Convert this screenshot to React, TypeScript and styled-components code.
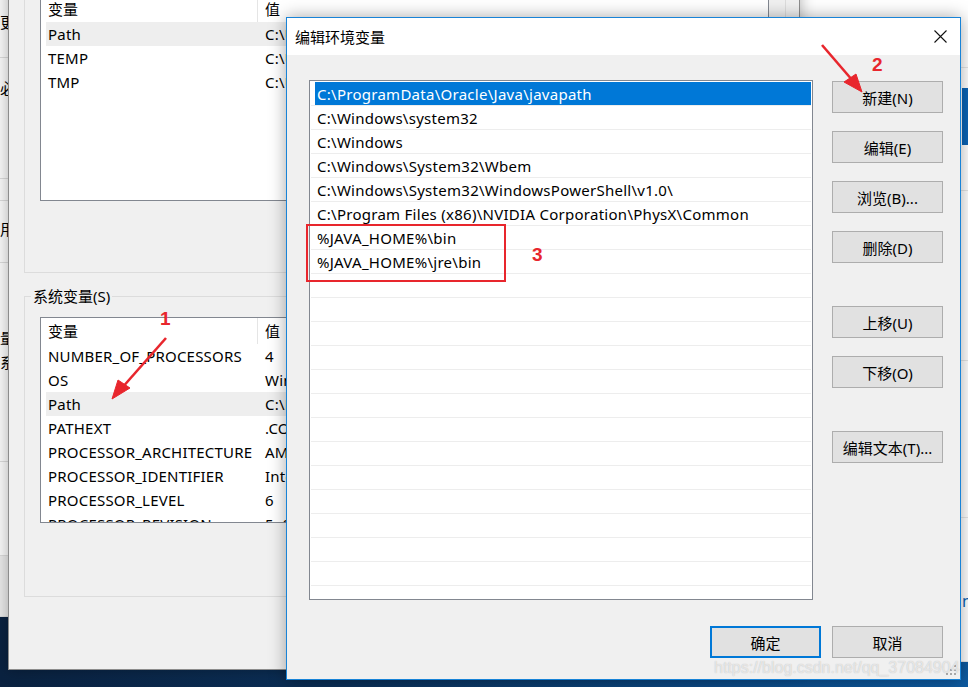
import React from "react";
import styled, { createGlobalStyle } from "styled-components";

const GlobalStyle = createGlobalStyle`
  *, *::before, *::after { box-sizing: border-box; }
  html, body { margin: 0; padding: 0; }
  body {
    width: 968px;
    height: 687px;
    overflow: hidden;
    font-family: "Noto Sans", "Noto Sans CJK SC", sans-serif;
    font-size: 15px;
    color: #000;
  }
`;

const Desktop = styled.div`
  position: relative;
  width: 968px;
  height: 687px;
  overflow: hidden;
  background: linear-gradient(90deg, #0a2240 0%, #0b2f57 35%, #0c4a86 75%, #0d5aa0 100%);
`;

/* ---------- window peeking at far left ---------- */

const LeftWindow = styled.div`
  position: absolute;
  left: 0;
  top: 0;
  width: 8px;
  height: 617px;
  overflow: hidden;
  background: #f9f9f9;
  display: flex;
  flex-direction: column;
`;

const LeftRow = styled.div<{ $h: number; $pad?: number; $shade?: boolean }>`
  height: ${(p) => p.$h}px;
  flex: none;
  padding-top: ${(p) => p.$pad ?? 0}px;
  border-bottom: 1px solid #dadada;
  background: ${(p) => (p.$shade ? "#e9e9e9" : "transparent")};
  line-height: 24px;
  white-space: nowrap;
`;

/* ---------- window peeking at right ---------- */

const RightWindow = styled.div`
  position: absolute;
  left: 790px;
  right: 0;
  top: 0;
  height: 662px;
  background: #fff;
  display: flex;
  flex-direction: column;
`;

const RightRow = styled.div<{ $h: number }>`
  height: ${(p) => p.$h}px;
  flex: none;
  border-bottom: 1px solid #e6e6e6;
  display: flex;
  flex-direction: column;
  align-items: flex-end;
`;

const BlueTile = styled.div`
  width: 6px;
  height: 57px;
  margin-top: 20px;
  background: #0a63b5;
`;

const BlueGlyph = styled.span`
  margin-top: 72px;
  margin-right: -4px;
  color: #0a63b5;
  font-size: 16px;
`;

/* ---------- environment variables window (back) ---------- */

const EnvWindow = styled.div`
  position: absolute;
  left: 8px;
  top: -60px;
  width: 792px;
  height: 730px;
  background: #f0f0f0;
  border: 1px solid #8c8c8c;
  box-shadow: 0 0 14px rgba(0, 0, 0, 0.3);
  padding: 23px 0 0 15px;
`;

const GroupBox = styled.fieldset<{ $padBottom: number; $gapTop?: number }>`
  margin: ${(p) => p.$gapTop ?? 0}px 0 0 0;
  padding: 11px 0 ${(p) => p.$padBottom}px 15px;
  width: 762px;
  min-width: 0;
  border: 1px solid #dcdcdc;

  legend {
    margin-left: -9px;
    padding: 0 2px;
    font-size: 15px;
    line-height: 20px;
    height: 20px;
  }
`;

const VarList = styled.div`
  width: 729px;
  height: 206px;
  border: 1px solid #828790;
  background: #fff;
  overflow: hidden;
  display: flex;
  flex-direction: column;
`;

const VarHeader = styled.div`
  height: 26px;
  flex: none;
  display: grid;
  grid-template-columns: 217px 1fr;
  line-height: 26px;
`;

const HeaderCell = styled.div<{ $divider?: boolean }>`
  padding-left: 7px;
  border-right: ${(p) => (p.$divider ? "1px solid #e5e5e5" : "none")};
  white-space: nowrap;
`;

const VarRow = styled.div<{ $selected?: boolean }>`
  height: 24px;
  flex: none;
  margin-left: 5px;
  display: grid;
  grid-template-columns: 212px 1fr;
  line-height: 24px;
  background: ${(p) => (p.$selected ? "#eeeeee" : "transparent")};
`;

const VarCell = styled.div<{ $value?: boolean }>`
  padding-left: ${(p) => (p.$value ? 7 : 2)}px;
  white-space: nowrap;
  overflow: hidden;
  letter-spacing: 0.2px;
`;

/* ---------- edit dialog (front) ---------- */

const Dialog = styled.div`
  position: absolute;
  left: 286px;
  top: 17px;
  width: 675px;
  height: 663px;
  border: 1px solid #1883d7;
  background: #f0f0f0;
  box-shadow: 0 0 16px rgba(0, 0, 0, 0.35);
  display: flex;
  flex-direction: column;
`;

const TitleBar = styled.div`
  height: 37px;
  flex: none;
  background: #fff;
  display: flex;
  align-items: center;
  justify-content: space-between;
  padding-left: 8px;
`;

const Title = styled.span`
  font-size: 15px;
  line-height: 20px;
`;

const CloseButton = styled.div`
  width: 40px;
  height: 37px;
  display: flex;
  align-items: center;
  justify-content: center;
`;

const Body = styled.div`
  flex: 1;
  display: flex;
  flex-direction: column;
  padding: 25px 17px 21px 22px;
`;

const Main = styled.div`
  display: flex;
  gap: 19px;
  height: 520px;
`;

const PathList = styled.div`
  width: 504px;
  height: 520px;
  border: 1px solid #828790;
  background: #fff;
  padding: 1px;
  overflow: hidden;
`;

const PathRow = styled.div<{ $selected?: boolean }>`
  height: 24px;
  line-height: 24px;
  padding-left: 6px;
  border-bottom: 1px solid #ededed;
  white-space: nowrap;
  letter-spacing: 0.27px;
  color: ${(p) => (p.$selected ? "#fff" : "#000")};
  background: ${(p) =>
    p.$selected ? "linear-gradient(90deg, transparent 4px, #0078d7 4px)" : "transparent"};
`;

const SideColumn = styled.div`
  width: 111px;
  display: flex;
  flex-direction: column;
  padding-top: 1px;
`;

const Button = styled.div<{ $gap?: number; $default?: boolean }>`
  width: 111px;
  height: 32px;
  flex: none;
  margin-top: ${(p) => p.$gap ?? 0}px;
  background: #e1e1e1;
  border: ${(p) => (p.$default ? "2px solid #0078d7" : "1px solid #adadad")};
  display: flex;
  align-items: center;
  justify-content: center;
  font-size: 15px;
  white-space: nowrap;
`;

const Footer = styled.div`
  display: flex;
  justify-content: flex-end;
  gap: 11px;
  margin-top: 26px;
`;

const Grip = styled.svg`
  position: absolute;
  right: 2px;
  bottom: 2px;
`;

/* ---------- overlays ---------- */

const Annotations = styled.svg`
  position: absolute;
  left: 0;
  top: 0;
  pointer-events: none;
`;

const Marker = styled.span<{ $x: number; $y: number }>`
  position: absolute;
  left: ${(p) => p.$x}px;
  top: ${(p) => p.$y}px;
  color: #e8262d;
  font-family: "Liberation Sans", Arial, sans-serif;
  font-weight: bold;
  font-size: 19px;
  line-height: 20px;
`;

const Watermark = styled.span`
  position: absolute;
  left: 714px;
  top: 657px;
  font-family: "Liberation Sans", Arial, sans-serif;
  font-size: 16px;
  line-height: 22px;
  color: rgba(255, 255, 255, 0.62);
  text-shadow: 0 0 1px rgba(0, 0, 0, 0.25);
  white-space: nowrap;
`;

const userVars = [
  { name: "Path", value: "C:\\Users\\Administrator\\AppData\\Local\\Microsoft\\WindowsApps;", selected: true },
  { name: "TEMP", value: "C:\\Users\\Administrator\\AppData\\Local\\Temp" },
  { name: "TMP", value: "C:\\Users\\Administrator\\AppData\\Local\\Temp" },
];

const systemVars = [
  { name: "NUMBER_OF_PROCESSORS", value: "4" },
  { name: "OS", value: "Windows_NT" },
  { name: "Path", value: "C:\\ProgramData\\Oracle\\Java\\javapath;", selected: true },
  { name: "PATHEXT", value: ".COM;.EXE;.BAT;.CMD;.VBS;.VBE;.JS" },
  { name: "PROCESSOR_ARCHITECTURE", value: "AMD64" },
  { name: "PROCESSOR_IDENTIFIER", value: "Intel64 Family 6 Model 94" },
  { name: "PROCESSOR_LEVEL", value: "6" },
  { name: "PROCESSOR_REVISION", value: "5e03" },
];

const paths = [
  "C:\\ProgramData\\Oracle\\Java\\javapath",
  "C:\\Windows\\system32",
  "C:\\Windows",
  "C:\\Windows\\System32\\Wbem",
  "C:\\Windows\\System32\\WindowsPowerShell\\v1.0\\",
  "C:\\Program Files (x86)\\NVIDIA Corporation\\PhysX\\Common",
  "%JAVA_HOME%\\bin",
  "%JAVA_HOME%\\jre\\bin",
];

function VariableTable({ rows }: { rows: { name: string; value: string; selected?: boolean }[] }) {
  return (
    <VarList>
      <VarHeader>
        <HeaderCell $divider>变量</HeaderCell>
        <HeaderCell>值</HeaderCell>
      </VarHeader>
      {rows.map((r) => (
        <VarRow key={r.name} $selected={r.selected}>
          <VarCell>{r.name}</VarCell>
          <VarCell $value>{r.value}</VarCell>
        </VarRow>
      ))}
    </VarList>
  );
}

export default function App() {
  const rows = Array.from({ length: 22 }, (_, i) => paths[i] ?? "");

  return (
    <>
      <GlobalStyle />
      <Desktop>
        <LeftWindow>
          <LeftRow $h={58} $pad={10}>更改</LeftRow>
          <LeftRow $h={121} $pad={18}>必要</LeftRow>
          <LeftRow $h={22} />
          <LeftRow $h={62} $pad={16}>用户</LeftRow>
          <LeftRow $h={199} $pad={63}>
            量<br />系统
          </LeftRow>
          <LeftRow $h={94} />
          <LeftRow $h={61} $shade />
        </LeftWindow>

        <RightWindow>
          <RightRow $h={68} />
          <RightRow $h={123}>
            <BlueTile />
          </RightRow>
          <RightRow $h={170} />
          <RightRow $h={157} />
          <RightRow $h={144}>
            <BlueGlyph>n</BlueGlyph>
          </RightRow>
        </RightWindow>

        <EnvWindow>
          <GroupBox $padBottom={71}>
            <legend>Administrator 的用户变量(U)</legend>
            <VariableTable rows={userVars} />
          </GroupBox>
          <GroupBox $padBottom={73} $gapTop={13}>
            <legend>系统变量(S)</legend>
            <VariableTable rows={systemVars} />
          </GroupBox>
        </EnvWindow>

        <Dialog>
          <TitleBar>
            <Title>编辑环境变量</Title>
            <CloseButton>
              <svg width="13" height="13" viewBox="0 0 13 13">
                <path d="M0.5 0.5 L12.5 12.5 M12.5 0.5 L0.5 12.5" stroke="#111" strokeWidth="1.1" />
              </svg>
            </CloseButton>
          </TitleBar>
          <Body>
            <Main>
              <PathList>
                {rows.map((p, i) => (
                  <PathRow key={i} $selected={i === 0}>
                    {p}
                  </PathRow>
                ))}
              </PathList>
              <SideColumn>
                <Button>新建(N)</Button>
                <Button $gap={18}>编辑(E)</Button>
                <Button $gap={18}>浏览(B)...</Button>
                <Button $gap={18}>删除(D)</Button>
                <Button $gap={43}>上移(U)</Button>
                <Button $gap={18}>下移(O)</Button>
                <Button $gap={43}>编辑文本(T)...</Button>
              </SideColumn>
            </Main>
            <Footer>
              <Button $default>确定</Button>
              <Button>取消</Button>
            </Footer>
          </Body>
          <Grip width="12" height="12" viewBox="0 0 12 12">
            <g fill="#a8a8a8">
              <rect x="8" y="0" width="2" height="2" />
              <rect x="4" y="4" width="2" height="2" />
              <rect x="8" y="4" width="2" height="2" />
              <rect x="0" y="8" width="2" height="2" />
              <rect x="4" y="8" width="2" height="2" />
              <rect x="8" y="8" width="2" height="2" />
            </g>
          </Grip>
        </Dialog>

        <Annotations width="968" height="687" viewBox="0 0 968 687">
          <g stroke="#e8262d" fill="#e8262d">
            <line x1="166" y1="338" x2="121" y2="389" strokeWidth="2.6" />
            <polygon points="112,399 130,388 118,380" strokeWidth="1" />
            <line x1="822" y1="45" x2="853" y2="81" strokeWidth="2.6" />
            <polygon points="862,92 844,82 856,74" strokeWidth="1" />
            <rect x="307" y="225" width="198" height="56" fill="none" strokeWidth="2" />
          </g>
        </Annotations>
        <Marker $x={160} $y={309}>1</Marker>
        <Marker $x={872} $y={55}>2</Marker>
        <Marker $x={532} $y={245}>3</Marker>

        <Watermark>https://blog.csdn.net/qq_37084904</Watermark>
      </Desktop>
    </>
  );
}
